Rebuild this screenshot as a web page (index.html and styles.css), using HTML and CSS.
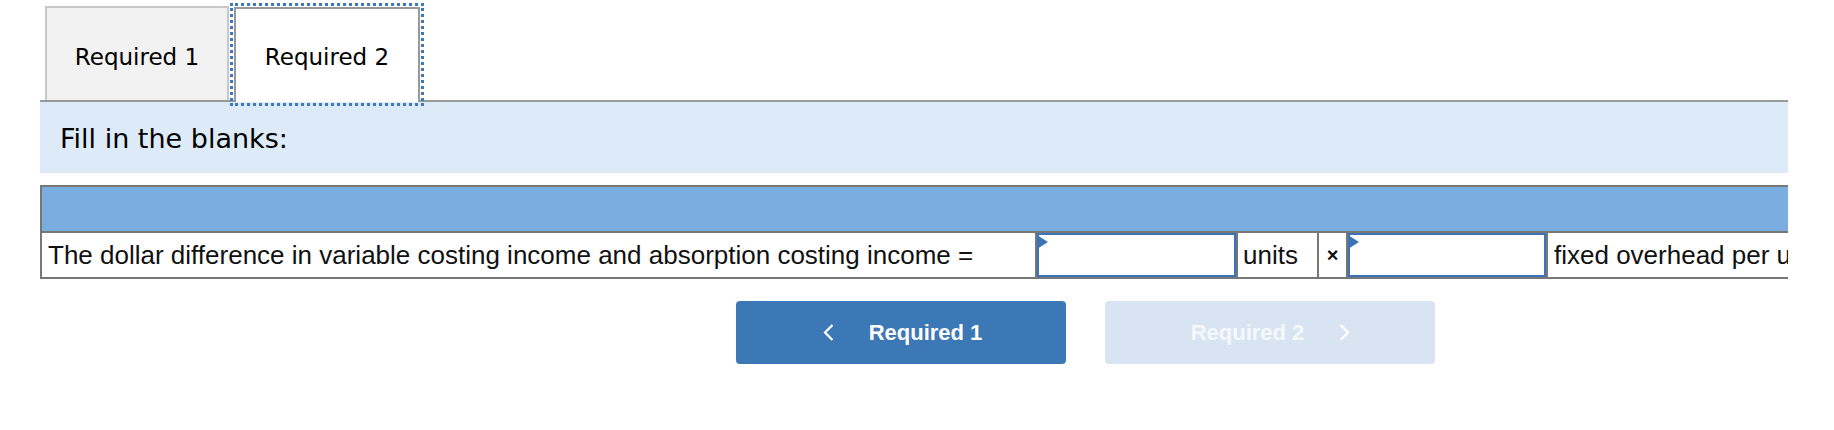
FILE: index.html
```html
<!DOCTYPE html>
<html lang="en">
<head>
<meta charset="utf-8">
<title>Required 2</title>
<link rel="stylesheet" href="styles.css">
</head>
<body>
<div class="page">
  <div class="tabbar">
    <div class="tab">Required 1</div>
    <div class="tab tab-active">Required 2</div>
  </div>
  <div class="panel">Fill in the blanks:</div>
  <div class="grid-wrap">
    <div class="grid">
      <div class="grid-head"></div>
      <div class="grid-row">
        <div class="cell c-text">The dollar difference in variable costing income and absorption costing income =</div>
        <div class="cell c-input"><div class="input"><span class="flag"></span></div></div>
        <div class="cell c-units">units</div>
        <div class="cell c-x">×</div>
        <div class="cell c-input c-input2"><div class="input"><span class="flag"></span></div></div>
        <div class="cell c-last">fixed overhead per unit</div>
      </div>
    </div>
  </div>
  <div class="nav">
    <button class="btn btn-prev">
      <svg class="chev" width="12" height="17" viewBox="0 0 12 17"><path d="M10.5 1 L3 8.5 L10.5 16" fill="none" stroke="#fff" stroke-width="2.2"/></svg>
      <span>Required 1</span>
    </button>
    <button class="btn btn-next">
      <span>Required 2</span>
      <svg class="chev" width="12" height="17" viewBox="0 0 12 17"><path d="M1.5 1 L9 8.5 L1.5 16" fill="none" stroke="#fff" stroke-width="2.2"/></svg>
    </button>
  </div>
</div>
</body>
</html>
```

FILE: styles.css
```css
* { box-sizing: border-box; }
body {
  margin: 0;
  background: #fff;
  font-family: "DejaVu Sans", Verdana, sans-serif;
  color: #000;
}
.page {
  padding-left: 40px;
  width: 1788px;
}
.tabbar {
  height: 102px;
  display: flex;
  align-items: flex-end;
  padding-left: 5px;
  border-bottom: 2px solid #999;
}
.tab {
  width: 184px;
  height: 94px;
  border: 2px solid #c8c8c8;
  border-bottom: none;
  background: #f2f2f2;
  display: flex;
  align-items: center;
  justify-content: center;
  font-size: 23px;
  padding-top: 5px;
}
.tab-active {
  width: 186px;
  height: 95px;
  margin-left: 5px;
  margin-bottom: -2px;
  background: #fff;
  border-color: #999;
  outline: 3px dotted #3c78c0;
  outline-offset: 1px;
  padding-top: 3px;
}
.panel {
  height: 71px;
  background: #dcebf7;
  padding-left: 20px;
  display: flex;
  align-items: center;
  font-size: 27px;
  padding-top: 2px;
}
.grid-wrap {
  margin-top: 12px;
  overflow: hidden;
}
.grid {
  width: 1900px;
  border: 2px solid #777;
  font-family: "Liberation Sans", Arial, sans-serif;
  font-size: 26px;
  color: #111;
}
.grid-head {
  height: 46px;
  background: #7aade0;
  border-bottom: 2px solid #777;
}
.grid-row {
  display: flex;
  height: 44px;
}
.cell {
  border-right: 2px solid #777;
  display: flex;
  align-items: center;
  white-space: nowrap;
}
.c-text { width: 995px; padding-left: 6px; }
.c-input { width: 201px; }
.c-input2 { width: 200px; }
.c-units { width: 81px; padding-left: 5px; }
.c-x { width: 29px; justify-content: center; font-weight: bold; font-size: 20px; }
.c-last { padding-left: 6px; border-right: none; }
.input {
  position: relative;
  width: 100%;
  height: 100%;
  border: 2px solid #3b73b9;
  background: #fff;
}
.flag {
  position: absolute;
  left: -2px;
  top: 0;
  width: 0;
  height: 0;
  border-left: 11px solid #3b73b9;
  border-top: 7.5px solid transparent;
  border-bottom: 7.5px solid transparent;
}
.nav {
  display: flex;
  gap: 39px;
  margin-top: 22px;
  padding-left: 696px;
}
.btn {
  width: 330px;
  height: 63px;
  border: none;
  border-radius: 4px;
  display: flex;
  align-items: center;
  justify-content: center;
  gap: 35px;
  font-family: "Liberation Sans", Arial, sans-serif;
  font-weight: 700;
  font-size: 22px;
  color: #fff;
  padding: 0 0 0 2px;
}
.btn-prev { background: #3c77b6; }
.btn-next { background: #d8e4f1; color: #f6f9fc; }
.chev { display: block; }
```
